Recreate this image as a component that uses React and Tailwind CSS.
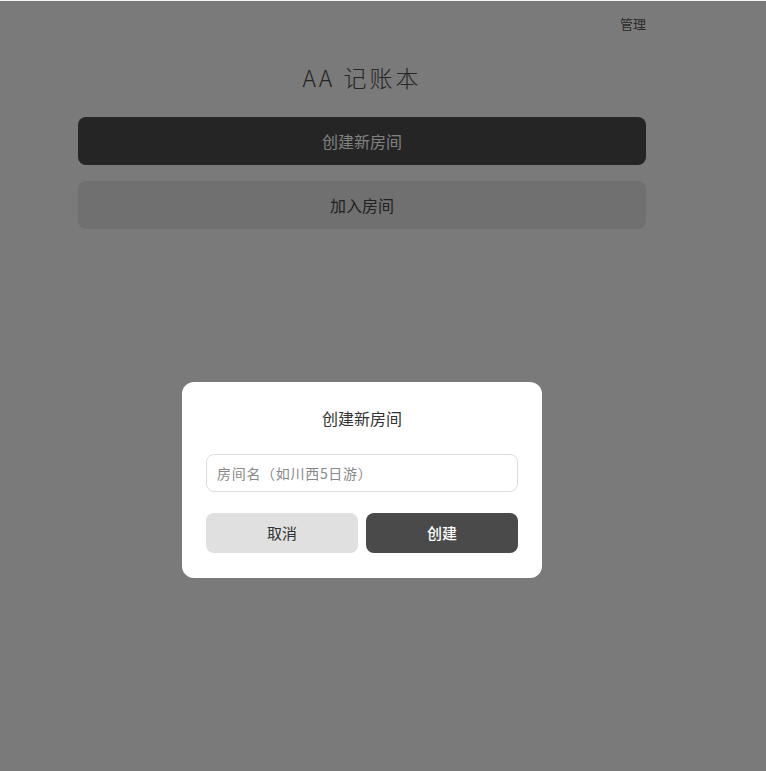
import React from "react";

const font = { fontFamily: '"Noto Sans CJK SC", "Noto Sans", sans-serif' };

export default function App() {
  return (
    <div style={font} className="relative min-h-[771px] w-full bg-[#f5f5f5]">
      <div className="ml-[78px] w-[568px]">
        <div className="flex justify-end pt-[15px]">
          <span className="text-[13px] leading-[18px] text-[#555]">管理</span>
        </div>
        <h1 className="mt-[28px] text-center text-[23px] font-light leading-[32px] tracking-[0.13em] text-[#4a4a4a]">
          AA 记账本
        </h1>
        <div className="mt-[24px] flex flex-col gap-4">
          <button className="h-12 w-full rounded-lg bg-[#4a4a4a] text-base text-white">
            创建新房间
          </button>
          <button className="h-12 w-full rounded-lg bg-[#e0e0e0] text-base text-[#444]">
            加入房间
          </button>
        </div>
      </div>

      <div className="fixed left-0 right-0 top-[1px] bottom-0 flex items-start bg-black/50 pl-[182px] pt-[381px]">
        <div className="w-[360px] rounded-xl bg-white px-6 pt-6 pb-[25px]">
          <h2 className="text-center text-base leading-6 text-[#333]">创建新房间</h2>
          <input
            style={font}
            placeholder="房间名（如川西5日游）"
            className="mt-6 h-[38px] w-full rounded-lg border border-[#dddddd] px-[10px] text-sm text-[#333] outline-none placeholder:text-[#888] placeholder:tracking-[0.05em]"
          />
          <div className="mt-[21px] flex gap-2">
            <button className="h-10 flex-1 rounded-lg bg-[#e0e0e0] text-[15px] text-[#333]">
              取消
            </button>
            <button className="h-10 flex-1 rounded-lg bg-[#4a4a4a] text-[15px] font-medium text-white">
              创建
            </button>
          </div>
        </div>
      </div>
    </div>
  );
}
